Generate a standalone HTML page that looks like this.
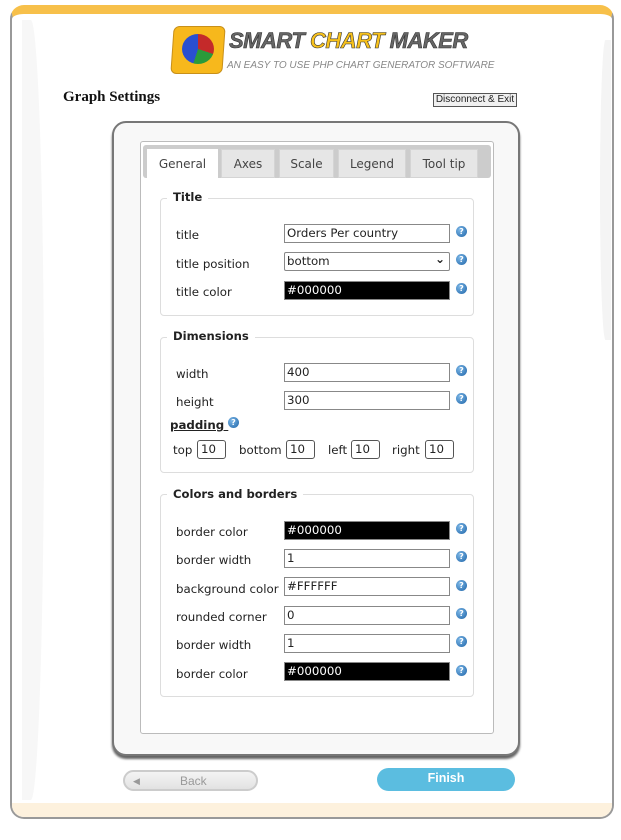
<!DOCTYPE html><html><head><style>
*{box-sizing:border-box}body{margin:0;width:621px;height:840px;background:#fff;position:relative;font-family:"DejaVu Sans","Liberation Sans",sans-serif;font-size:12px;color:#222;overflow:hidden}
.a{position:absolute}
.frame{left:10px;top:5px;width:604px;height:814px;border:2px solid #999;border-top:9px solid #f7c04a;border-radius:14px;background:#fff}
.cream{left:12px;top:803px;width:600px;height:14px;background:#fdf1dd;border-radius:0 0 12px 12px}
.panel{left:112px;top:121px;width:408px;height:635px;border:2px solid #777;border-radius:14px;background:#f8f8f8;box-shadow:0 3px 2px #666}
.inner{left:140px;top:141px;width:354px;height:593px;border:1px solid #bbb;border-radius:3px;background:#fff}
.tabbar{left:143px;top:145px;width:348px;height:33px;background:#ccc;border-radius:3px}
.tab{top:149px;height:29px;background:#e6e6e6;border:1px solid #d4d4d4;text-align:center;line-height:28px;font-size:12px;color:#444}
.fs{left:160px;width:314px;border:1px solid #ddd;border-radius:4px}
.lg{font-weight:bold;font-size:11.6px;background:#fff;padding:0 6px;color:#222}
.lb{left:176px;font-size:11.8px;color:#222}
.in{left:284px;width:166px;height:19px;border:1px solid #888;font-size:11.8px;padding-left:2px;line-height:17px;background:#fff}
.blk{background:#000;color:#fff}
.h{left:456px;width:11px;height:11px;border-radius:50%;background:radial-gradient(circle at 35% 35%,#7bb6e6,#1e64a8);color:#fff;font-size:8px;font-weight:bold;text-align:center;line-height:11px}
.sm{height:19px;width:29px;border:1px solid #555;border-radius:3px;font-size:11.8px;padding-left:3px;line-height:17px}
.t{font-size:11.8px}
</style></head><body>
<div class="a frame"></div>
<div class="a cream"></div>
<div class="a" style="left:22px;top:20px;width:22px;height:780px;border-radius:0 60% 60% 0/0 50% 50% 0;background:#f7f7f7"></div>
<div class="a" style="left:600px;top:40px;width:11px;height:300px;border-radius:100% 0 0 100%;background:#f4f4f4"></div>
<div class="a" style="left:172px;top:26px;width:52px;height:48px;background:#f7b81c;border:1px solid #c8901a;border-radius:6px;transform:skewX(-4deg)"></div>
<div class="a" style="left:182px;top:34px;width:32px;height:30px;border-radius:50%;background:conic-gradient(#c42a2a 0 30%,#2a9a3a 0 55%,#2a4fd0 0)"></div>
<div class="a" style="left:229px;top:28px;font:italic bold 22px 'Liberation Sans',sans-serif;color:#666;letter-spacing:-0.5px;-webkit-text-stroke:0.6px #333">SMART <span style="color:#f7c11c">CHART</span> MAKER</div>
<div class="a" style="left:227px;top:60px;font:italic 10px 'Liberation Sans',sans-serif;color:#888">AN EASY TO USE PHP CHART GENERATOR SOFTWARE</div>
<div class="a" style="left:63px;top:89px;font:bold 15px 'Liberation Serif',serif;color:#111">Graph Settings</div>
<div class="a" style="left:433px;top:93px;width:84px;height:14px;border:1px solid #555;background:#f0f0f0;font:10px 'Liberation Sans',sans-serif;text-align:center;line-height:12px">Disconnect &amp; Exit</div>
<div class="a panel"></div><div class="a inner"></div>
<div class="a tabbar"></div>
<div class="a tab" style="left:147px;width:71px;background:#fff;border-color:#fff;height:30px">General</div>
<div class="a tab" style="left:221px;width:54px">Axes</div>
<div class="a tab" style="left:279px;width:55px">Scale</div>
<div class="a tab" style="left:338px;width:68px">Legend</div>
<div class="a tab" style="left:410px;width:68px">Tool tip</div>

<div class="a fs" style="top:198px;height:118px"></div><div class="a lg" style="left:167px;top:190px">Title</div>
<div class="a lb" style="top:228px">title</div><div class="a in" style="top:224px">Orders Per country</div><div class="a h" style="top:226px">?</div>
<div class="a lb" style="top:257px">title position</div><div class="a in" style="top:252px;border-radius:2px">bottom<span style="position:absolute;right:4px;top:-2px;font-size:12px;font-weight:bold">&#8964;</span></div><div class="a h" style="top:254px">?</div>
<div class="a lb" style="top:285px">title color</div><div class="a in blk" style="top:281px">#000000</div><div class="a h" style="top:283px">?</div>

<div class="a fs" style="top:337px;height:136px"></div><div class="a lg" style="left:167px;top:329px">Dimensions</div>
<div class="a lb" style="top:367px">width</div><div class="a in" style="top:363px">400</div><div class="a h" style="top:365px">?</div>
<div class="a lb" style="top:395px">height</div><div class="a in" style="top:391px">300</div><div class="a h" style="top:393px">?</div>
<div class="a" style="left:170px;top:418px;font-weight:bold;font-size:11.8px;text-decoration:underline">padding&nbsp;</div><div class="a h" style="left:228px;top:417px">?</div>
<div class="a t" style="left:173px;top:443px">top</div><div class="a sm" style="left:197px;top:440px">10</div>
<div class="a t" style="left:239px;top:443px">bottom</div><div class="a sm" style="left:286px;top:440px">10</div>
<div class="a t" style="left:328px;top:443px">left</div><div class="a sm" style="left:351px;top:440px">10</div>
<div class="a t" style="left:392px;top:443px">right</div><div class="a sm" style="left:425px;top:440px">10</div>

<div class="a fs" style="top:494px;height:203px"></div><div class="a lg" style="left:167px;top:487px">Colors and borders</div>
<div class="a lb" style="top:525px">border color</div><div class="a in blk" style="top:521px">#000000</div><div class="a h" style="top:523px">?</div>
<div class="a lb" style="top:553px">border width</div><div class="a in" style="top:549px">1</div><div class="a h" style="top:551px">?</div>
<div class="a lb" style="top:582px">background color</div><div class="a in" style="top:577px">#FFFFFF</div><div class="a h" style="top:580px">?</div>
<div class="a lb" style="top:610px">rounded corner</div><div class="a in" style="top:606px">0</div><div class="a h" style="top:608px">?</div>
<div class="a lb" style="top:638px">border width</div><div class="a in" style="top:634px">1</div><div class="a h" style="top:636px">?</div>
<div class="a lb" style="top:667px">border color</div><div class="a in blk" style="top:662px">#000000</div><div class="a h" style="top:665px">?</div>

<div class="a" style="left:123px;top:770px;width:135px;height:21px;border:2px solid #ccc;border-radius:11px;background:linear-gradient(#f4f4f4,#e2e2e2);font:12px 'Liberation Sans',sans-serif;color:#999;line-height:18px"><span style="position:absolute;left:8px;font-size:9px">&#9664;</span><span style="position:absolute;left:55px">Back</span></div>
<div class="a" style="left:377px;top:768px;width:138px;height:23px;border-radius:12px;background:#5bbde0;color:#fff;font:bold 12.5px 'Liberation Sans',sans-serif;text-align:center;line-height:21px">Finish</div>
</body></html>
